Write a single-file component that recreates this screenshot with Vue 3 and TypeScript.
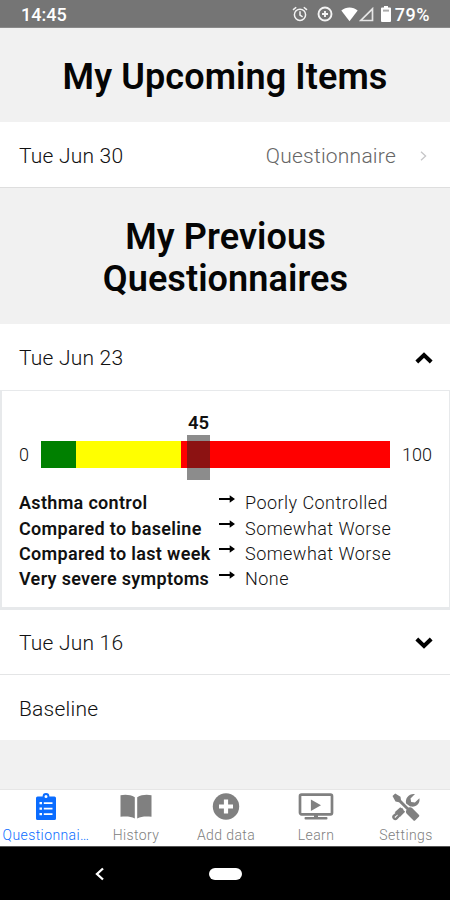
<script setup lang="ts">
import { ref } from 'vue'

interface Answer {
  label: string
  value: string
}

interface Tab {
  id: string
  label: string
}

const score = 45

const answers: Answer[] = [
  { label: 'Asthma control', value: 'Poorly Controlled' },
  { label: 'Compared to baseline', value: 'Somewhat Worse' },
  { label: 'Compared to last week', value: 'Somewhat Worse' },
  { label: 'Very severe symptoms', value: 'None' },
]

const tabs: Tab[] = [
  { id: 'questionnaires', label: 'Questionnai…' },
  { id: 'history', label: 'History' },
  { id: 'add', label: 'Add data' },
  { id: 'learn', label: 'Learn' },
  { id: 'settings', label: 'Settings' },
]

const active = ref('questionnaires')
</script>

<template>
  <div class="screen">
    <header class="status">
      <span class="clock">14:45</span>
      <div class="indicators">
        <svg class="alarm" width="16" height="16" viewBox="0 0 16 16" fill="none" stroke="#f4f4f4" stroke-width="1.5">
          <circle cx="8" cy="8.800" r="5.600" />
          <path d="M8 5.200v3.900l2.600 1.700M1 3.900 4.200 1.200M15 3.900l-3.200-2.700" />
        </svg>
        <svg class="saver" width="16" height="16" viewBox="0 0 16 16" fill="none" stroke="#f4f4f4">
          <circle cx="8" cy="8" r="6.500" stroke-width="1.900" />
          <path d="M8 5v6M5 8h6" stroke-width="1.900" />
        </svg>
        <svg class="wifi" width="17" height="15" viewBox="0 0 17 15" fill="#fff">
          <path d="M.3 3.600C5-.6 12-.6 16.700 3.600L8.500 14.300Z" />
        </svg>
        <svg class="signal" width="15" height="15" viewBox="0 0 15 15" fill="none" stroke="#e6e6e6" stroke-width="1.700">
          <path d="M1.800 13.500H13.500V1.800Z" />
        </svg>
        <svg class="battery" width="10" height="16" viewBox="0 0 10 16">
          <path d="M3 0h4v1.600h2q1 0 1 1V15q0 1-1 1H1q-1 0-1-1V2.600q0-1 1-1h2z" fill="#fff" />
          <path d="M2 3.600h6v2H2z" fill="#aaa" />
        </svg>
        <span class="percent">79%</span>
      </div>
    </header>

    <h1 class="heading upcoming">My Upcoming Items</h1>
    <div class="row first">
      <span>Tue Jun 30</span>
      <span class="kind">Questionnaire</span>
      <svg class="chevron" width="7" height="10" viewBox="0 0 7 10" fill="none" stroke="#c6c6c8" stroke-width="1.300">
        <path d="m1 .8 4.600 4.200L1 9.200" />
      </svg>
    </div>

    <h1 class="heading previous">My Previous<br />Questionnaires</h1>
    <div class="row expanded">
      <span>Tue Jun 23</span>
      <svg class="toggle" width="18" height="12" viewBox="0 0 18 12" fill="none" stroke="#000" stroke-width="4">
        <path d="m1.800 10 7.200-7 7.200 7" />
      </svg>
    </div>

    <section class="details">
      <div class="scale">
        <span class="min">0</span>
        <div class="bar">
          <div class="zone green"></div>
          <div class="zone yellow"></div>
          <div class="zone red"></div>
          <div class="marker" :style="{ left: score + '%' }">
            <span class="score">{{ score }}</span>
          </div>
        </div>
        <span class="max">100</span>
      </div>
      <div v-for="answer in answers" :key="answer.label" class="answer">
        <span class="label">{{ answer.label }}</span>
        <svg class="arrow" width="16" height="8" viewBox="0 0 16 8">
          <path d="M0 2.900h10.700V.3L16 4l-5.300 3.700V5.100H0z" fill="#000" />
        </svg>
        <span class="value">{{ answer.value }}</span>
      </div>
    </section>

    <div class="row">
      <span>Tue Jun 16</span>
      <svg class="toggle" width="18" height="12" viewBox="0 0 18 12" fill="none" stroke="#000" stroke-width="4">
        <path d="m1.800 2 7.200 7 7.200-7" />
      </svg>
    </div>
    <div class="row last"><span>Baseline</span></div>

    <div class="spacer"></div>

    <nav class="tabs">
      <button v-for="tab in tabs" :key="tab.id" class="tab" :class="{ active: tab.id === active }" @click="active = tab.id">
        <svg v-if="tab.id === 'questionnaires'" width="36" height="28" viewBox="0 0 36 28">
          <path fill="currentColor" fill-rule="evenodd" d="M9.600 3.500h5a3.400 3.400 0 0 1 6.800 0h5q1.600 0 1.600 1.600v20.300q0 1.600-1.600 1.600H9.600Q8 27 8 25.400V5.100q0-1.600 1.600-1.600M18 2.100a1.500 1.500 0 1 0 0 3 1.500 1.500 0 0 0 0-3M11.500 9v2.300H14V9zm4.300.2v1.900h8.700V9.200zM11.500 14.500v2.300H14v-2.300zm4.300.2v1.900h8.700v-1.900zM11.500 20v2.300H14V20zm4.300.2v1.900h8.700v-1.900z" />
        </svg>
        <svg v-else-if="tab.id === 'history'" width="36" height="28" viewBox="0 0 36 28" fill="currentColor">
          <path d="M2.500 2.300C7 1.200 12.500 1.600 16.800 4.200V25.400C12.700 23.400 8 23 2.500 23.800ZM33.500 2.300C29 1.200 23.500 1.600 19.200 4.200V25.400C23.300 23.400 28 23 33.500 23.800Z" />
        </svg>
        <svg v-else-if="tab.id === 'add'" width="36" height="28" viewBox="0 0 36 28">
          <circle cx="18" cy="13.500" r="13.200" fill="currentColor" />
          <path d="M18 6.500v14M11 13.500h14" stroke="#fff" stroke-width="4.200" />
        </svg>
        <svg v-else-if="tab.id === 'learn'" width="36" height="28" viewBox="0 0 36 28">
          <rect x="2" y="1.700" width="32" height="19.600" rx="1.500" fill="none" stroke="currentColor" stroke-width="2.700" />
          <path d="M12.900 6.500 23 12.200l-10.100 5.700zM16 21h4v3h8.500q1 0 1 1.200t-1 1.300h-21q-1 0-1-1.300T7.500 24H16z" fill="currentColor" />
        </svg>
        <svg v-else width="36" height="28" viewBox="0 0 36 28" fill="none" stroke="currentColor">
          <path d="M4.500 3 7.200.5l5.300 3.200.5 3.400 7.400 7.500q2.200-1 4 .7l6.400 6.400q1 1 0 2l-3.500 3.500q-1 1-2 0L19 21q-1.900-1.900-.4-4.200L11 9.200l-3.500-.6z" fill="currentColor" stroke="none" />
          <path d="M14.800 15.800 6 22.700q-1.300 1.300 0 2.600 1.300 1.300 2.600 0l6.900-7.500" stroke-width="2.400" />
          <path d="m12.300 14.300-5.600 5 5.400 4.400 5-5z" fill="currentColor" stroke="none" />
          <path d="M18.100 10.500C16.900 5 21 .2 27 1l-4.500 4.500.7 3.400 3.700.7L31.400 5.200c1 5-3 9-8 8.400l-1.200-.2z" fill="currentColor" stroke="none" />
        </svg>
        <span class="caption">{{ tab.label }}</span>
      </button>
    </nav>

    <footer class="system">
      <svg class="back" width="9" height="14" viewBox="0 0 9 14" fill="none" stroke="#fff" stroke-width="2.300">
        <path d="M8 1.500 2 7l6 5.500" />
      </svg>
      <div class="home"></div>
      <span></span>
    </footer>
  </div>
</template>

<style>
body {
  margin: 0;
  background: #f1f1f1;
}
</style>

<style scoped>
.screen {
  box-sizing: border-box;
  width: 450px;
  height: 900px;
  display: flex;
  flex-direction: column;
  overflow: hidden;
  background: #f1f1f1;
  color: #111;
  font-family: Roboto, sans-serif;
  font-size: 21px;
  font-weight: 300;
  letter-spacing: 0.22px;
}
.screen > * {
  flex-shrink: 0;
  box-sizing: border-box;
}
.status {
  height: 28px;
  padding: 2px 20px 0 21px;
  display: flex;
  align-items: center;
  justify-content: space-between;
  background: #757575;
  border-bottom: 1px solid #8a8a8a;
  color: #fff;
  font-size: 18px;
  font-weight: 500;
  letter-spacing: 0;
}
.indicators {
  display: flex;
  align-items: center;
}
.indicators svg {
  margin-bottom: 1px;
}
.alarm {
  margin-right: 9px;
}
.wifi {
  margin-left: 8px;
}
.signal {
  margin-left: 1px;
}
.battery {
  margin: 0 4px 0 7px;
}
.percent {
  letter-spacing: 0.5px;
}
.heading {
  margin: 0;
  text-align: center;
  font-size: 36px;
  line-height: 42px;
  font-weight: 600;
  letter-spacing: 0.1px;
  color: #050505;
}
.upcoming {
  height: 94px;
  padding-top: 28px;
}
.previous {
  height: 136px;
  padding: 28px 0 0 1px;
}
.row {
  height: 64px;
  padding: 2px 17px 0 19px;
  display: flex;
  align-items: center;
  justify-content: space-between;
  background: #fff;
}
.first {
  height: 66px;
  padding-right: 23px;
  border-bottom: 1px solid #dedede;
}
.kind {
  margin-left: auto;
  margin-right: 24px;
  color: #666;
}
.expanded {
  height: 66px;
}
.last {
  height: 66px;
  border-top: 1px solid #e4e5e6;
}
.details {
  height: 220px;
  padding: 50px 16px 0 17px;
  border: 2px solid #e7e9eb;
  border-top-width: 1px;
  border-bottom-width: 3px;
  border-right-width: 1px;
  background: #fff;
  font-size: 18px;
}
.scale {
  height: 27px;
  margin-bottom: 22px;
  display: flex;
  align-items: center;
  letter-spacing: 0;
}
.min {
  width: 22px;
}
.bar {
  position: relative;
  width: 349px;
  height: 27px;
  display: flex;
}
.green {
  width: 35px;
  background: #008000;
}
.yellow {
  width: 105px;
  background: #ff0;
}
.red {
  flex: 1;
  background: #f00;
}
.marker {
  position: absolute;
  top: -6px;
  width: 23px;
  height: 45px;
  margin-left: -11px;
  background: rgba(35, 35, 35, 0.52);
}
.score {
  position: absolute;
  left: -5px;
  right: -5px;
  bottom: 47px;
  text-align: center;
  line-height: 20px;
  font-size: 18.500px;
  font-weight: 600;
}
.max {
  margin-left: auto;
  margin-right: 1px;
}
.answer {
  height: 25.400px;
  display: flex;
  align-items: center;
}
.label {
  width: 200px;
  font-weight: 600;
  letter-spacing: 0.320px;
  white-space: nowrap;
}
.value {
  letter-spacing: 0.460px;
}
.arrow {
  width: 16px;
  margin: -8px 10px 0 0;
}
.spacer {
  height: 49px;
}
.tabs {
  height: 57px;
  padding-left: 1px;
  display: grid;
  grid-template-columns: repeat(5, 90px);
  background: #fff;
  border-top: 1px solid #e6e6e6;
}
.tab {
  min-width: 0;
  margin: 0;
  padding: 3px 0 0;
  border: 0;
  background: none;
  display: flex;
  flex-direction: column;
  align-items: center;
  color: #808080;
  font: 300 14px/17px Roboto, sans-serif;
  letter-spacing: 0.400px;
}
.active {
  color: #0a6cff;
}
.caption {
  margin-top: 6px;
  white-space: nowrap;
}
.system {
  height: 54px;
  display: grid;
  grid-template-columns: 209px 33px 1fr;
  align-items: center;
  background: #000;
  border-top: 1px solid #555;
}
.back {
  margin-left: 95px;
}
.home {
  height: 12px;
  border-radius: 6px;
  background: #fff;
}
</style>
